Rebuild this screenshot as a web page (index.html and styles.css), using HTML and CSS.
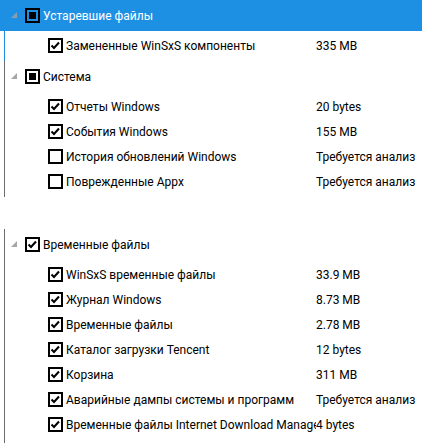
FILE: index.html
```html
<!DOCTYPE html>
<html lang="ru">
<head>
  <meta charset="UTF-8">
  <title>Очистка диска</title>
  <link rel="stylesheet" href="styles.css">
</head>
<body>

<div class="tree">

  <div class="group selected">
    <div class="group-row">
      <svg class="twisty" width="7" height="7"><polygon points="6,0 6,6 0,6"/></svg>
      <svg class="cb" width="15" height="15"><rect class="box" x="1" y="1" width="13" height="13"/><rect class="fill" x="4" y="4" width="7" height="7"/></svg>
      <span class="label">Устаревшие файлы</span>
    </div>
    <div class="items">
      <div class="item">
        <svg class="cb" width="15" height="15"><rect class="box" x="1" y="1" width="13" height="13"/><path d="M3.5 7.5 L6 10 L11 4.5"/></svg>
        <span class="name">Замененные WinSxS компоненты</span>
        <span class="size">335 MB</span>
      </div>
    </div>
  </div>

  <div class="group">
    <div class="group-row">
      <svg class="twisty" width="7" height="7"><polygon points="6,0 6,6 0,6"/></svg>
      <svg class="cb" width="15" height="15"><rect class="box" x="1" y="1" width="13" height="13"/><rect class="fill" x="4" y="4" width="7" height="7"/></svg>
      <span class="label">Система</span>
    </div>
    <div class="items">
      <div class="item">
        <svg class="cb" width="15" height="15"><rect class="box" x="1" y="1" width="13" height="13"/><path d="M3.5 7.5 L6 10 L11 4.5"/></svg>
        <span class="name">Отчеты Windows</span>
        <span class="size">20 bytes</span>
      </div>
      <div class="item">
        <svg class="cb" width="15" height="15"><rect class="box" x="1" y="1" width="13" height="13"/><path d="M3.5 7.5 L6 10 L11 4.5"/></svg>
        <span class="name">События Windows</span>
        <span class="size">155 MB</span>
      </div>
      <div class="item">
        <svg class="cb" width="15" height="15"><rect class="box" x="1" y="1" width="13" height="13"/></svg>
        <span class="name">История обновлений Windows</span>
        <span class="size">Требуется анализ</span>
      </div>
      <div class="item">
        <svg class="cb" width="15" height="15"><rect class="box" x="1" y="1" width="13" height="13"/></svg>
        <span class="name">Поврежденные Appx</span>
        <span class="size">Требуется анализ</span>
      </div>
    </div>
  </div>

  <div class="group spaced last">
    <div class="group-row">
      <svg class="twisty" width="7" height="7"><polygon points="6,0 6,6 0,6"/></svg>
      <svg class="cb" width="15" height="15"><rect class="box" x="1" y="1" width="13" height="13"/><path d="M3.5 7.5 L6 10 L11 4.5"/></svg>
      <span class="label">Временные файлы</span>
    </div>
    <div class="items">
      <div class="item">
        <svg class="cb" width="15" height="15"><rect class="box" x="1" y="1" width="13" height="13"/><path d="M3.5 7.5 L6 10 L11 4.5"/></svg>
        <span class="name">WinSxS временные файлы</span>
        <span class="size">33.9 MB</span>
      </div>
      <div class="item">
        <svg class="cb" width="15" height="15"><rect class="box" x="1" y="1" width="13" height="13"/><path d="M3.5 7.5 L6 10 L11 4.5"/></svg>
        <span class="name">Журнал Windows</span>
        <span class="size">8.73 MB</span>
      </div>
      <div class="item">
        <svg class="cb" width="15" height="15"><rect class="box" x="1" y="1" width="13" height="13"/><path d="M3.5 7.5 L6 10 L11 4.5"/></svg>
        <span class="name">Временные файлы</span>
        <span class="size">2.78 MB</span>
      </div>
      <div class="item">
        <svg class="cb" width="15" height="15"><rect class="box" x="1" y="1" width="13" height="13"/><path d="M3.5 7.5 L6 10 L11 4.5"/></svg>
        <span class="name">Каталог загрузки Tencent</span>
        <span class="size">12 bytes</span>
      </div>
      <div class="item">
        <svg class="cb" width="15" height="15"><rect class="box" x="1" y="1" width="13" height="13"/><path d="M3.5 7.5 L6 10 L11 4.5"/></svg>
        <span class="name">Корзина</span>
        <span class="size">311 MB</span>
      </div>
      <div class="item">
        <svg class="cb" width="15" height="15"><rect class="box" x="1" y="1" width="13" height="13"/><path d="M3.5 7.5 L6 10 L11 4.5"/></svg>
        <span class="name">Аварийные дампы системы и программ</span>
        <span class="size">Требуется анализ</span>
      </div>
      <div class="item">
        <svg class="cb" width="15" height="15"><rect class="box" x="1" y="1" width="13" height="13"/><path d="M3.5 7.5 L6 10 L11 4.5"/></svg>
        <span class="name">Временные файлы Internet Download Manager</span>
        <span class="size">4 bytes</span>
      </div>
    </div>
  </div>

</div>

</body>
</html>
```

FILE: styles.css
```css
html, body {
  margin: 0;
  padding: 0;
  background: #fff;
  height: 100%;
  overflow: hidden;
}

.tree {
  font-family: Roboto, "Noto Sans", sans-serif;
  font-size: 12px;
  color: #000;
}

.group {
  margin-left: 4px;
  border-left: 1px solid #6b6b6b;
}

.group.selected {
  border-left-color: #1e90e4;
}

.group.spaced {
  margin-top: 32px;
}

.group.last {
  padding-bottom: 20px;
}

.group-row {
  display: flex;
  align-items: center;
  height: 31px;
  margin-left: -5px;
  padding-left: 11px;
}

.selected .group-row {
  background-color: #1e90e4;
  color: #fff;
}

.twisty {
  margin-right: 7px;
  fill: #a6a6a6;
}

.selected .twisty {
  fill: #8a9db0;
}

.cb .box {
  fill: #fff;
  stroke: #000;
  stroke-width: 2;
}

.selected .group-row .cb .box {
  fill: none;
}

.cb .fill {
  fill: #000;
}

.cb path {
  fill: none;
  stroke: #000;
  stroke-width: 2;
}

.label {
  margin-left: 3px;
}

.items {
  padding: 2px 0 3px;
}

.item {
  display: flex;
  align-items: center;
  height: 25px;
  padding-left: 43px;
}

.name {
  width: 250px;
  margin-left: 3px;
  white-space: nowrap;
  overflow: hidden;
}

.size {
  white-space: nowrap;
}
```
